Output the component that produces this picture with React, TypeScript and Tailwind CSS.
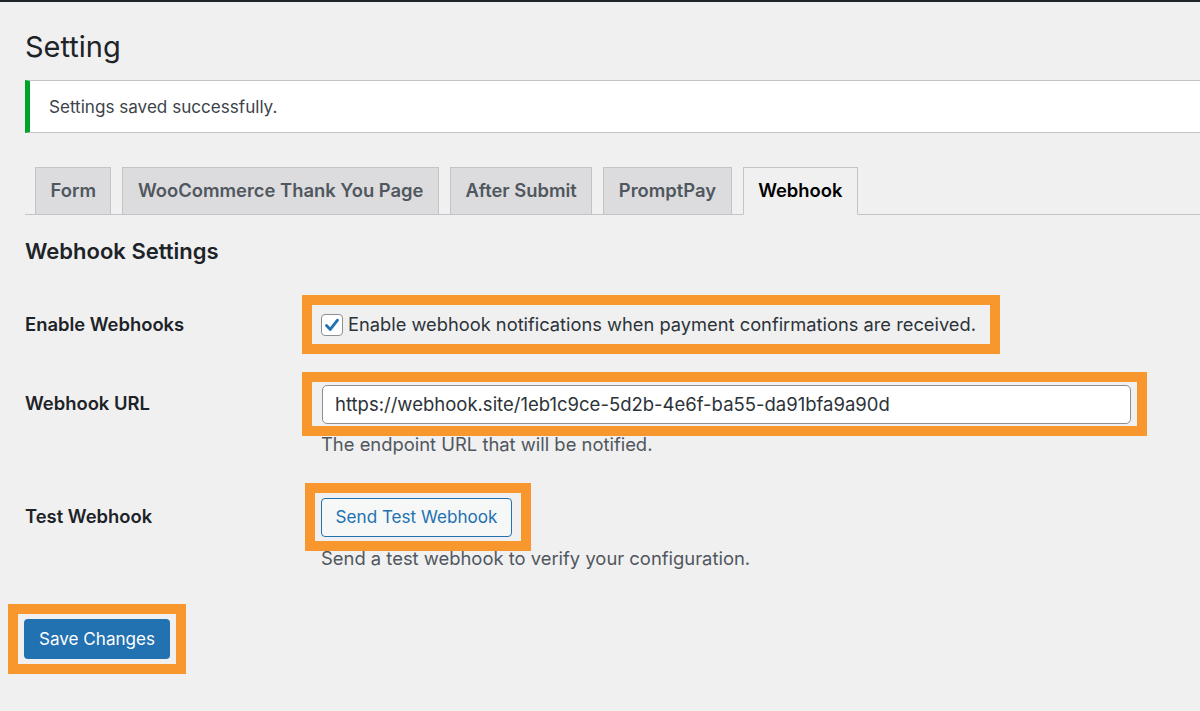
import { useState } from 'react';

const tabs = ['Form', 'WooCommerce Thank You Page', 'After Submit', 'PromptPay', 'Webhook'];

export default function App() {
    const [active, setActive] = useState('Webhook');
    const [enabled, setEnabled] = useState(true);
    const [url, setUrl] = useState('https://webhook.site/1eb1c9ce-5d2b-4e6f-ba55-da91bfa9a90d');

    return (
        <div className="min-h-screen bg-[#f0f0f1] text-[#1d2327] overflow-hidden" style={{ fontFamily: 'Inter, "Noto Sans", sans-serif' }}>
            <div className="h-[2px] bg-[#1d2327]" />
            <div className="pl-[25px]">
                <h1 className="pt-[25px] text-[29px] leading-[40px] font-normal">Setting</h1>

                <div className="mt-[13px] h-[53px] bg-white border-y border-[#c3c4c7] border-l-[5px] border-l-[#00a32a] flex items-center pl-[19px]">
                    <p className="text-[17.1px] text-[#3c434a]">Settings saved successfully.</p>
                </div>

                <nav className="mt-[34px] flex gap-[11px] pl-[10px] border-b border-[#c3c4c7]">
                    {tabs.map(t => (
                        <button
                            key={t}
                            onClick={() => setActive(t)}
                            className={
                                t === active
                                    ? '-mb-px h-[48px] px-[14.5px] flex items-center border border-[#c3c4c7] border-b-[#f0f0f1] bg-[#f0f0f1] text-[18.4px] font-semibold text-black'
                                    : '-mb-px h-[48px] px-[14.5px] flex items-center border border-[#c3c4c7] bg-[#dcdcde] text-[18.4px] font-semibold text-[#50575e]'
                            }
                        >
                            {t}
                        </button>
                    ))}
                </nav>

                <h2 className="mt-[21px] text-[22px] leading-[30px] font-semibold">Webhook Settings</h2>

                <div className="mt-[29px] flex">
                    <div className="w-[296px] h-[59px] flex items-center text-[18.4px] font-semibold">Enable Webhooks</div>
                    <div className="-ml-[19px] h-[59px] inline-flex items-center border-[10px] border-[#f7972e] pl-[9px] pr-[14px]">
                        <label className="flex items-center gap-[5px] text-[18.3px] text-[#2c3338] cursor-pointer">
                            <span
                                onClick={() => setEnabled(!enabled)}
                                className="w-[22px] h-[22px] rounded-[4px] border border-[#8c8f94] bg-white flex items-center justify-center"
                            >
                                {enabled && (
                                    <svg viewBox="0 0 20 20" className="w-[20px] h-[20px]">
                                        <path d="M4.5 10.5 L8.3 14.4 L15.5 5.2" fill="none" stroke="#2271b1" strokeWidth="2.8" strokeLinecap="round" strokeLinejoin="round" />
                                    </svg>
                                )}
                            </span>
                            Enable webhook notifications when payment confirmations are received.
                        </label>
                    </div>
                </div>

                <div className="mt-[18px] flex">
                    <div className="w-[296px] h-[64px] flex items-center text-[18.4px] font-semibold">Webhook URL</div>
                    <div>
                        <div className="-ml-[19px] w-[845px] h-[64px] flex items-center border-[10px] border-[#f7972e] pl-[10px] pr-[6px]">
                            <input
                                value={url}
                                onChange={e => setUrl(e.target.value)}
                                className="w-full h-[39px] rounded-[5px] border border-[#8c8f94] bg-white px-[12px] text-[18.5px] text-[#2c3338] outline-none"
                            />
                        </div>
                        <p className="-mt-[4px] text-[18.4px] leading-[24px] text-[#50575e]">The endpoint URL that will be notified.</p>
                    </div>
                </div>

                <div className="mt-[27px] flex">
                    <div className="w-[296px] h-[68px] flex items-center text-[18.4px] font-semibold">Test Webhook</div>
                    <div>
                        <div className="-ml-[16px] h-[68px] inline-flex items-center border-[10px] border-[#f7972e] pl-[6px] pr-[9px]">
                            <button className="h-[39px] w-[191px] rounded-[4px] border border-[#2271b1] bg-[#f6f7f7] text-[17.1px] text-[#2271b1]">
                                Send Test Webhook
                            </button>
                        </div>
                        <p className="-mt-[5px] text-[18.4px] leading-[24px] text-[#50575e]">Send a test webhook to verify your configuration.</p>
                    </div>
                </div>

                <div className="mt-[34px] -ml-[17px] h-[70px] inline-flex items-center border-[10px] border-[#f7972e] px-[6px]">
                    <button className="h-[40px] w-[146px] rounded-[4px] bg-[#2271b1] text-[17.1px] text-white">Save Changes</button>
                </div>
            </div>
        </div>
    );
}
